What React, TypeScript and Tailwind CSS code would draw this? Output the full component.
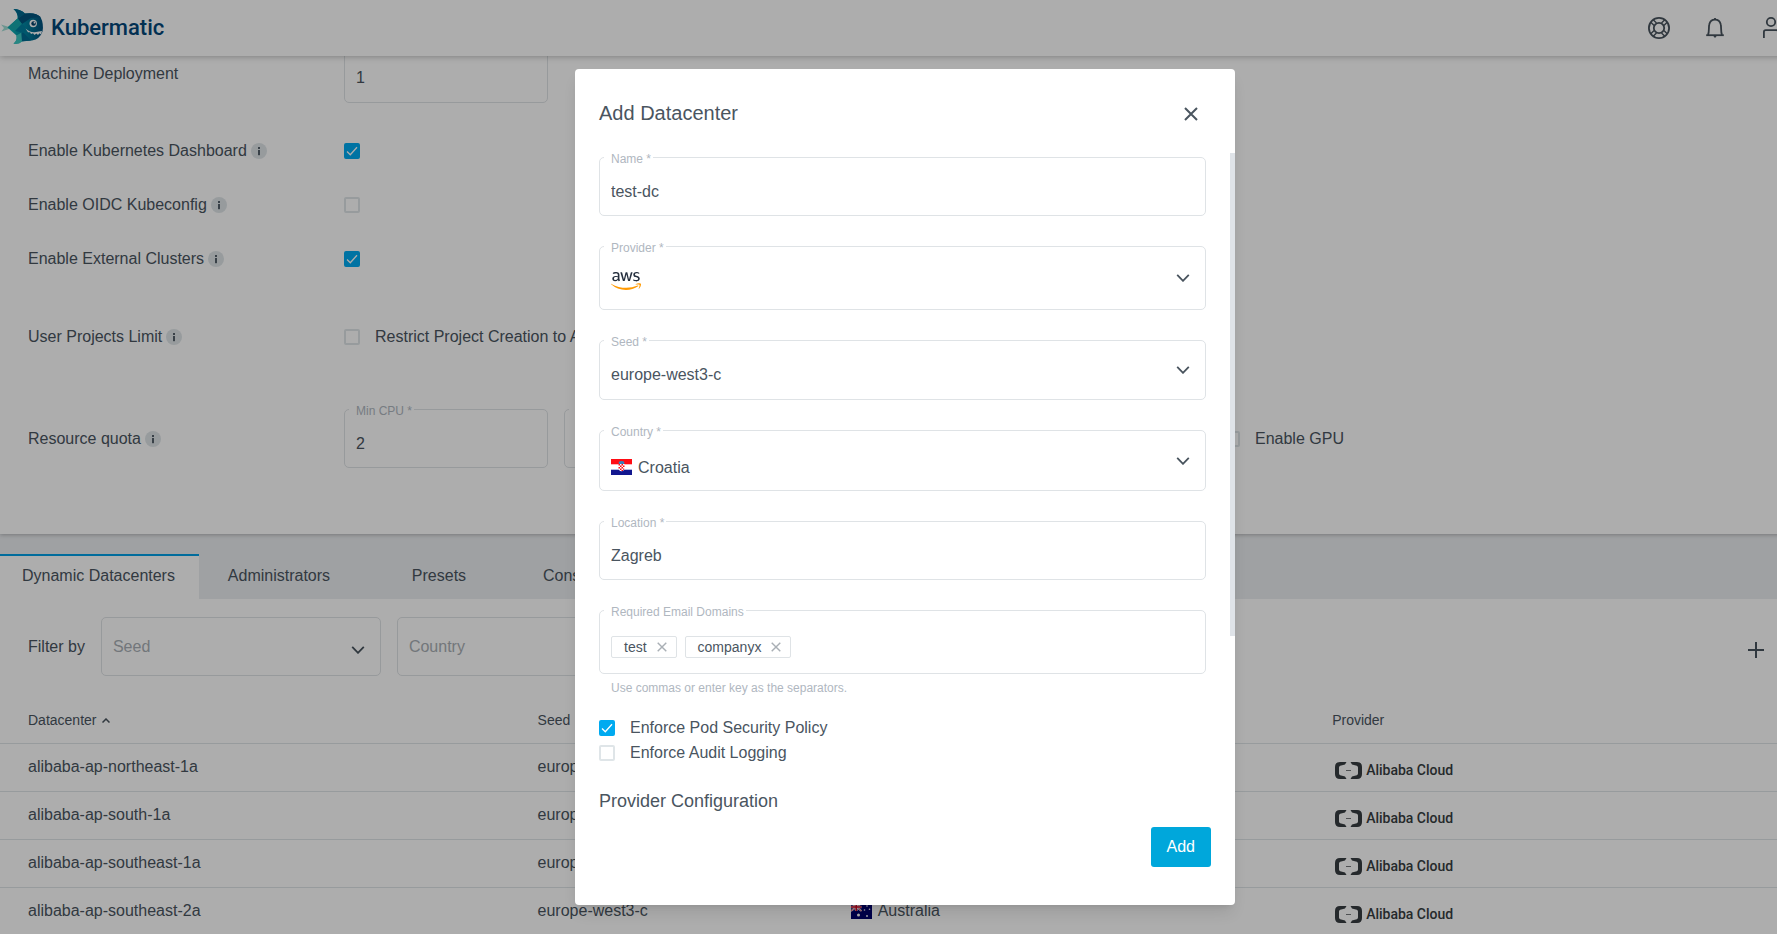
import React, { useId } from "react";
import { FaAws } from "react-icons/fa";

function Chevron({ className = "" }: { className?: string }) {
  return (
    <svg viewBox="0 0 14 8" fill="none" stroke="#48535d" strokeWidth="1.8" className={`h-2 w-3.5 ${className}`} aria-hidden="true">
      <path d="M1.2 0.8 L7 6.8 L12.8 0.8" />
    </svg>
  );
}

function Cross({ className = "" }: { className?: string }) {
  return (
    <svg viewBox="0 0 14 14" fill="none" stroke="currentColor" className={className} aria-hidden="true">
      <path d="M1 1 L13 13 M13 1 L1 13" />
    </svg>
  );
}

function InfoIcon() {
  return (
    <svg viewBox="0 0 16 16" className="size-4" aria-hidden="true">
      <circle cx="8" cy="8" r="8" fill="#dfe5e8" />
      <rect x="7" y="4" width="2" height="2" fill="#55616b" />
      <rect x="7" y="7" width="2" height="5.2" fill="#55616b" />
    </svg>
  );
}

function FishLogo() {
  return (
    <svg viewBox="0 0 46 56" className="h-14 w-[46px]" aria-hidden="true">
      <defs>
        <linearGradient id="fish" x1="0" y1="0" x2="1" y2="0">
          <stop offset="0" stopColor="#12bdb9" />
          <stop offset="0.45" stopColor="#008aa5" />
          <stop offset="1" stopColor="#004f7c" />
        </linearGradient>
      </defs>
      <path d="M1 24.5 L9 27 L12 26.5 L9 29 L1.5 31.5 L4 28 Z" fill="#9fdcd4" />
      <path
        d="M7.5 27.5 L17.5 18.5 Q18 12.5 13.5 9 Q20.500 9 25 13.500 Q36 12 40.500 17 Q44 24 42.500 31.500 Q40 39 32 40.500 L21.500 41.500 Q19 44.500 13.500 43.500 Q17.500 41 16.500 35.500 Z"
        fill="url(#fish)"
      />
      <path d="M13.5 9 Q20.500 9 25 13.500 L18 18.500 Q18 12.500 13.500 9 Z" fill="#00678f" />
      <path d="M25 13.500 Q36 12 40.500 17 L31 18 L22 24 L18 18.500 Z" fill="#00557f" />
      <path d="M7.500 27.500 L17.500 18.500 L22 24 L15 31 Z" fill="#17a9ad" />
      <path d="M22 24 L15 31 L24 33 L27 28 Z" fill="#007f9f" />
      <path d="M16.500 35.500 L21.500 32.500 L22 41.500 Q19 44.500 13.500 43.500 Q17.500 41 16.500 35.500 Z" fill="#3cc7c1" />
      <path d="M24 33 L31 40.500 L22 41.300 L21.500 32.500 Z" fill="#006c92" />
      <circle cx="33.200" cy="23.500" r="3.700" fill="#fff" />
      <circle cx="33.600" cy="23.500" r="2.300" fill="#013f69" />
      <circle cx="34.500" cy="22.700" r="0.900" fill="#fff" />
      <path d="M25.500 28.500 Q30 33 36 32 L42 31 L41 34.500 L39.500 33.300 L38 35 L36.400 33.600 L34.500 35 L33 33.300 L31 34.100 L30 32.300 L28 32.300 Z" fill="#fff" />
    </svg>
  );
}

function Support() {
  return (
    <svg viewBox="0 0 24 24" fill="none" stroke="#48535d" strokeWidth="1.800" className="size-6" aria-hidden="true">
      <circle cx="12" cy="12" r="10.100" />
      <circle cx="12" cy="12" r="5.200" />
      <path d="M6.200 3.800 L9.500 7.100 M3.800 6.200 L7.100 9.500 M17.800 3.800 L14.500 7.100 M20.200 6.200 L16.900 9.500 M6.200 20.200 L9.500 16.900 M3.800 17.800 L7.100 14.500 M17.800 20.200 L14.500 16.900 M20.200 17.800 L16.900 14.500" strokeWidth="1.400" />
    </svg>
  );
}

function Bell() {
  return (
    <svg viewBox="0 0 24 24" fill="none" stroke="#48535d" strokeWidth="1.800" className="size-6" aria-hidden="true">
      <path d="M3.200 19.200 H20.800" />
      <path d="M5 19 C6.400 16 5.500 11 6.300 8.200 C7 5.300 9.200 3.700 12 3.700 C14.800 3.700 17 5.300 17.700 8.200 C18.500 11 17.600 16 19 19" />
      <path d="M10.300 20 H13.700 L12 22 Z" fill="#48535d" stroke="none" />
      <path d="M12 2 V4" />
    </svg>
  );
}

function User() {
  return (
    <svg viewBox="0 0 24 24" fill="none" stroke="#48535d" strokeWidth="1.800" className="size-6" aria-hidden="true">
      <circle cx="12" cy="6" r="4.200" />
      <path d="M4.900 22 V16 Q4.900 14.200 6.700 14.200 H17.300 Q19.100 14.200 19.100 16 V22" />
    </svg>
  );
}

function CroatiaFlag() {
  return (
    <svg viewBox="0 0 21 16" className="h-4 w-[21px]" aria-hidden="true">
      <rect width="21" height="16" fill="#fff" />
      <rect width="21" height="5.300" fill="#ff0c14" />
      <rect y="10.700" width="21" height="5.300" fill="#12178f" />
      <path d="M7.500 3.800 L8.500 2.300 L10.500 1.900 L12.500 2.300 L13.500 3.800 L13 5 H8 Z" fill="#3d7fb8" />
      <path d="M7.500 5 H13.500 V9 Q13.500 12 10.500 12.300 Q7.500 12 7.500 9 Z" fill="#fff" />
      <path d="M7.500 5 h1.500 v1.500 h-1.500 z M10.500 5 h1.500 v1.500 h-1.500 z M9 6.500 h1.500 v1.500 h-1.500 z M12 6.500 h1.500 v1.500 h-1.500 z M7.500 8 h1.500 v1.500 h-1.500 z M10.500 8 h1.500 v1.500 h-1.500 z M9 9.500 h1.500 v1.500 h-1.500 z M12 9.500 h1.200 v1.200 h-1.200 z M10.500 11 h1.500 v1 h-1.500 z" fill="#ff0c14" />
    </svg>
  );
}

function AustraliaFlag() {
  return (
    <svg viewBox="0 0 21 16" className="h-4 w-[21px]" aria-hidden="true">
      <rect width="21" height="16" fill="#00006d" />
      <path d="M0 0 L10.500 8 M10.500 0 L0 8" stroke="#fff" strokeWidth="1.600" />
      <path d="M0 0 L10.500 8 M10.500 0 L0 8" stroke="#d8001f" strokeWidth="0.600" />
      <path d="M5.200 0 V8 M0 4 H10.500" stroke="#fff" strokeWidth="2.600" />
      <path d="M5.200 0 V8 M0 4 H10.500" stroke="#d8001f" strokeWidth="1.500" />
      <circle cx="7.500" cy="12" r="1.500" fill="#fff" />
      <circle cx="16" cy="3" r="0.800" fill="#fff" />
      <circle cx="13.500" cy="7" r="0.800" fill="#fff" />
      <circle cx="18.500" cy="6.200" r="0.800" fill="#fff" />
      <circle cx="16" cy="13" r="0.900" fill="#fff" />
    </svg>
  );
}

function AlibabaCloud() {
  return (
    <span className="flex items-center gap-1 pt-1.5 pl-[3px]">
      <svg viewBox="0 0 27 17" className="h-[17px] w-[27px]" fill="#373d41" aria-hidden="true">
        <path d="M11.500 0 H5 Q0 0 0 5 V12 Q0 17 5 17 H11.500 L10 14.600 L5.200 13.200 Q4 12.800 4 11.500 V5.500 Q4 4.200 5.200 3.800 L10 2.400 Z" />
        <path d="M15.500 0 H22 Q27 0 27 5 V12 Q27 17 22 17 H15.500 L17 14.600 L21.800 13.200 Q23 12.800 23 11.500 V5.500 Q23 4.200 21.800 3.800 L17 2.400 Z" />
        <rect x="11" y="8" width="5" height="1" opacity="0.700" />
      </svg>
      <span className="font-['Roboto',sans-serif] text-sm leading-4 font-medium whitespace-nowrap text-[#373d41]">Alibaba Cloud</span>
    </span>
  );
}

function Checkbox({ label, checked = false, hideLabel = false }: { label: string; checked?: boolean; hideLabel?: boolean }) {
  return (
    <label className="flex items-center gap-[15px] leading-6">
      <span className="relative block size-4">
        <input
          type="checkbox"
          defaultChecked={checked}
          aria-label={hideLabel ? label : undefined}
          className="peer block size-4 appearance-none rounded-xs border-2 border-[#dfe5e8] checked:border-[#00aaf0] checked:bg-[#00aaf0]"
        />
        <svg viewBox="0 0 16 16" fill="none" stroke="#fff" strokeWidth="1.300" className="pointer-events-none absolute inset-0 hidden size-4 peer-checked:block" aria-hidden="true">
          <path d="M3 8.500 L6.300 11.800 L13 4.300" />
        </svg>
      </span>
      {!hideLabel && <span className="whitespace-nowrap">{label}</span>}
    </label>
  );
}

function Outline({ label, id, className = "", children }: { label?: string; id?: string; className?: string; children: React.ReactNode }) {
  return (
    <div className={`relative flex items-center rounded-[5px] border border-[#dfe3e6] ${className}`}>
      {label && (
        <label htmlFor={id} className="absolute -top-2 left-1 bg-white pr-0.5 pl-[7px] text-xs leading-[18px] whitespace-nowrap text-[#b0b7bf]">
          {label}
        </label>
      )}
      {children}
    </div>
  );
}

function TextField({ label, value, className = "" }: { label: string; value: string; className?: string }) {
  const id = useId();
  return (
    <Outline label={label} id={id} className={`h-[59px] ${className}`}>
      <input id={id} defaultValue={value} className="w-full bg-transparent px-[11px] pt-2.5 outline-none" />
    </Outline>
  );
}

function SelectField({ label, value, icon, inset = "pt-2.5 pl-[11px]", className = "" }: { label: string; value: string; icon?: React.ReactNode; inset?: string; className?: string }) {
  const id = useId();
  return (
    <Outline label={label} id={id} className={className}>
      <select id={id} defaultValue={value} className={`w-full appearance-none bg-transparent pr-12 outline-none ${inset}`}>
        <option>{value}</option>
      </select>
      {icon}
      <Chevron className="pointer-events-none absolute right-[15px]" />
    </Outline>
  );
}

function Setting({ name, info = true, className = "", children }: { name: string; info?: boolean; className?: string; children: React.ReactNode }) {
  return (
    <div className={`flex items-center ${className}`}>
      <div className="flex w-[316px] shrink-0 items-center gap-1">
        <span>{name}</span>
        {info && <InfoIcon />}
      </div>
      {children}
    </div>
  );
}

function FilterSelect({ name }: { name: string }) {
  return (
    <Outline className="h-[59px] w-[280px]">
      <select aria-label={name} className="w-full appearance-none bg-transparent px-[11px] text-[#a9afb5] outline-none">
        <option>{name}</option>
      </select>
      <Chevron className="pointer-events-none absolute top-7 right-[15px]" />
    </Outline>
  );
}

function Chip({ text }: { text: string }) {
  return (
    <span className="flex h-[22px] items-center gap-2.5 rounded-xs border border-[#dfe3e6] pr-[9px] pl-3 text-sm leading-5">
      {text}
      <button type="button" aria-label={`Remove ${text}`} className="text-[#a9afb5]">
        <Cross className="size-2.5 stroke-2" />
      </button>
    </span>
  );
}

const tabs = ["Dynamic Datacenters", "Administrators", "Presets", "Constraint Templates"];

const rows = [
  { name: "alibaba-ap-northeast-1a", country: "Japan" },
  { name: "alibaba-ap-south-1a", country: "India" },
  { name: "alibaba-ap-southeast-1a", country: "Singapore" },
  { name: "alibaba-ap-southeast-2a", country: "Australia" },
];

function AdminPage() {
  return (
    <>
      <header className="relative z-10 flex h-14 items-center justify-between bg-white pr-[27px] shadow-[0_1px_6px_rgba(0,0,0,0.25)]">
        <a href="#home" className="flex items-center gap-[5px]">
          <FishLogo />
          <span className="font-['Roboto',sans-serif] text-[22px] leading-7 font-medium text-[#04487a]">Kubermatic</span>
        </a>
        <nav className="flex items-center gap-8">
          <button type="button" aria-label="Support"><Support /></button>
          <button type="button" aria-label="Notifications"><Bell /></button>
          <button type="button" aria-label="Account"><User /></button>
        </nav>
      </header>

      <main className="-mt-3">
        <section className="relative bg-white px-7 pb-[66px] shadow-[0_1px_4px_rgba(0,0,0,0.25)]">
          <Setting name="Machine Deployment" info={false}>
            <Outline className="h-[59px] w-[204px]">
              <input aria-label="Machine Deployment" defaultValue="1" className="w-full bg-transparent px-[11px] pt-2 outline-none" />
            </Outline>
          </Setting>
          <div className="mt-[21px]">
            <Setting name="Enable Kubernetes Dashboard" className="h-[54px]"><Checkbox label="Enable Kubernetes Dashboard" checked hideLabel /></Setting>
            <Setting name="Enable OIDC Kubeconfig" className="h-[54px]"><Checkbox label="Enable OIDC Kubeconfig" hideLabel /></Setting>
            <Setting name="Enable External Clusters" className="h-[54px]"><Checkbox label="Enable External Clusters" checked hideLabel /></Setting>
          </div>
          <Setting name="User Projects Limit" className="mt-6 h-[54px]"><Checkbox label="Restrict Project Creation to Admins" /></Setting>
          <Setting name="Resource quota" className="mt-[45px]">
            <div className="flex items-center gap-4">
              <TextField label="Min CPU *" value="2" className="w-[204px]" />
              <TextField label="Max CPU *" value="5" className="w-[204px]" />
              <TextField label="Min RAM *" value="3" className="w-[204px]" />
              <TextField label="Max RAM *" value="9" className="w-[204px]" />
              <Checkbox label="Enable GPU" />
            </div>
          </Setting>
        </section>

        <div className="overflow-hidden bg-[#ebedf0]">
          <div role="tablist" className="-ml-0.5 flex pt-5">
            {tabs.map((tab, i) => (
              <button
                key={tab}
                type="button"
                role="tab"
                aria-selected={i === 0}
                className={`h-[45px] min-w-40 border-t-2 px-6 pb-1 whitespace-nowrap ${i === 0 ? "border-[#00a0e6] bg-white" : "border-transparent"}`}
              >
                {tab}
              </button>
            ))}
          </div>
        </div>

        <section className="bg-white pt-[18px]">
          <div className="flex items-center gap-4 pr-[42px] pl-7">
            <span>Filter by</span>
            <FilterSelect name="Seed" />
            <FilterSelect name="Country" />
            <button type="button" aria-label="Add datacenter" className="mt-1.5 ml-auto">
              <svg viewBox="0 0 24 24" fill="none" stroke="#48535d" strokeWidth="2" className="size-6" aria-hidden="true">
                <path d="M12 4 V20 M4 12 H20" />
              </svg>
            </button>
          </div>
          <table className="mt-[22px] w-full table-fixed text-left">
            <thead>
              <tr className="h-[45px] border-b border-[#dfe5e8] text-sm">
                <th scope="col" className="w-[29.7%] pl-7 font-normal">
                  <span className="flex items-center gap-1.5">
                    Datacenter
                    <svg viewBox="0 0 8 5" fill="none" stroke="#48535d" strokeWidth="1.500" className="h-[5px] w-2" aria-hidden="true">
                      <path d="M0.500 4.500 L4 1 L7.500 4.500" />
                    </svg>
                  </span>
                </th>
                <th scope="col" className="w-[17.3%] font-normal">Seed</th>
                <th scope="col" className="w-[26.6%] font-normal">Country</th>
                <th scope="col" className="font-normal">Provider</th>
              </tr>
            </thead>
            <tbody>
              {rows.map((row) => (
                <tr key={row.name} className="h-12 border-b border-[#dfe5e8]">
                  <td className="pl-7">{row.name}</td>
                  <td>europe-west3-c</td>
                  <td>
                    <span className="flex items-center gap-1.5">
                      {row.country === "Australia" && <AustraliaFlag />}
                      {row.country}
                    </span>
                  </td>
                  <td><AlibabaCloud /></td>
                </tr>
              ))}
            </tbody>
          </table>
        </section>
      </main>
    </>
  );
}

function AddDatacenterDialog() {
  const domains = useId();
  return (
    <div role="dialog" aria-modal="true" aria-labelledby="dialog-title" className="relative w-[660px] rounded-sm bg-white pb-[38px] shadow-lg">
      <div className="flex items-center justify-between pt-7 pr-[37px] pl-6">
        <h1 id="dialog-title" className="text-xl leading-8">Add Datacenter</h1>
        <button type="button" aria-label="Close" className="mt-0.5">
          <Cross className="size-3.5 stroke-2" />
        </button>
      </div>

      <form className="relative mt-6 pr-[29px] pl-6">
        <span className="absolute top-0 right-0 h-[73%] w-[5px] bg-[#dfe3e8]" />
        <div className="flex flex-col gap-[30px] pt-1">
          <TextField label="Name *" value="test-dc" />
          <SelectField
            label="Provider *"
            value="aws"
            inset="pl-[11px] text-transparent"
            className="h-16"
            icon={
              <span className="pointer-events-none absolute top-[22px] left-[11px] block h-6 w-[30px]">
                <FaAws className="absolute inset-0 h-6 w-[30px] text-[#252f3e] [clip-path:inset(0_0_42%_0)]" />
                <FaAws className="absolute inset-0 h-6 w-[30px] text-[#ff9900] [clip-path:inset(58%_0_0_0)]" />
              </span>
            }
          />
          <SelectField label="Seed *" value="europe-west3-c" className="h-[60px]" />
          <SelectField
            label="Country *"
            value="Croatia"
            inset="pt-3.5 pl-[38px]"
            className="h-[61px]"
            icon={<span className="pointer-events-none absolute top-7 left-[11px]"><CroatiaFlag /></span>}
          />
          <TextField label="Location *" value="Zagreb" />
          <Outline label="Required Email Domains" id={domains} className="h-16 gap-2 px-[11px] pt-2.5">
            <Chip text="test" />
            <Chip text="companyx" />
            <input id={domains} className="min-w-0 flex-1 bg-transparent outline-none" />
          </Outline>
        </div>
        <p className="mt-1.5 pl-3 text-xs leading-4 text-[#b0b7bf]">Use commas or enter key as the separators.</p>
        <div className="mt-5 flex flex-col gap-px">
          <Checkbox label="Enforce Pod Security Policy" checked />
          <Checkbox label="Enforce Audit Logging" />
        </div>
        <h2 className="mt-[22px] text-lg leading-7">Provider Configuration</h2>
      </form>

      <div className="mt-3 flex justify-end pr-6">
        <button type="button" className="h-10 rounded-[3px] bg-[#00a7db] px-4 text-white">Add</button>
      </div>
    </div>
  );
}

export default function App() {
  return (
    <div className="relative h-screen overflow-hidden bg-white font-['Liberation_Sans',Arial,sans-serif] text-base text-[#4a555f]">
      <div className="w-[calc(100%+33px)]">
        <AdminPage />
      </div>
      <div className="absolute inset-0 -right-[33px] -bottom-10 z-20 flex items-center justify-center bg-black/32">
        <AddDatacenterDialog />
      </div>
    </div>
  );
}
